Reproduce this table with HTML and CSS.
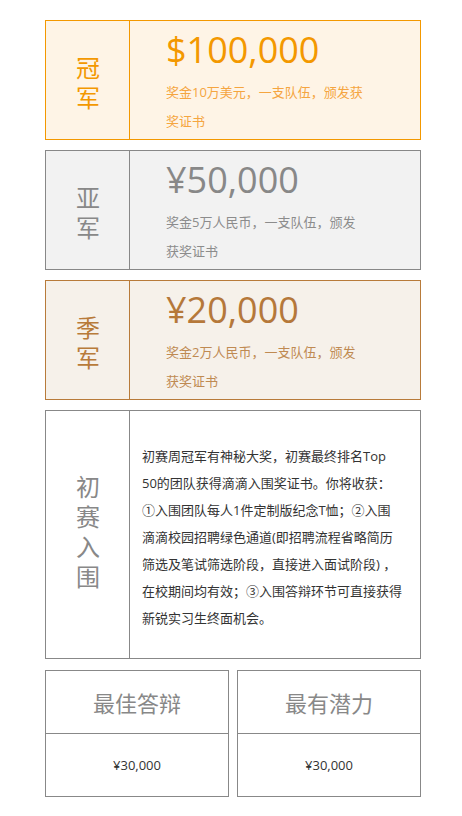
FILE: index.html
```html
<!DOCTYPE html>
<html lang="zh-CN">
<head>
<meta charset="utf-8">
<title>奖项设置</title>
<link rel="stylesheet" href="styles.css">
</head>
<body>
<div class="page">
  <div class="prize gold">
    <div class="rank"><span class="rank-text">冠军</span></div>
    <div class="info">
      <div class="amount">$100,000</div>
      <div class="desc">奖金10万美元，一支队伍，颁发获奖证书</div>
    </div>
  </div>
  <div class="prize silver">
    <div class="rank"><span class="rank-text">亚军</span></div>
    <div class="info">
      <div class="amount">¥50,000</div>
      <div class="desc">奖金5万人民币，一支队伍，颁发获奖证书</div>
    </div>
  </div>
  <div class="prize bronze">
    <div class="rank"><span class="rank-text">季军</span></div>
    <div class="info">
      <div class="amount">¥20,000</div>
      <div class="desc">奖金2万人民币，一支队伍，颁发获奖证书</div>
    </div>
  </div>
  <div class="prize finalist">
    <div class="rank"><span class="rank-text">初赛入围</span></div>
    <div class="text">初赛周冠军有神秘大奖，初赛最终排名Top<br>50的团队获得滴滴入围奖证书。你将收获：<br>①入围团队每人1件定制版纪念T恤；②入围<br>滴滴校园招聘绿色通道(即招聘流程省略简历<br>筛选及笔试筛选阶段，直接进入面试阶段) ，<br>在校期间均有效；③入围答辩环节可直接获得<br>新锐实习生终面机会。</div>
  </div>
  <div class="extras">
    <div class="extra">
      <div class="extra-title">最佳答辩</div>
      <div class="extra-amount">¥30,000</div>
    </div>
    <div class="extra">
      <div class="extra-title">最有潜力</div>
      <div class="extra-amount">¥30,000</div>
    </div>
  </div>
</div>
</body>
</html>
```

FILE: styles.css
```css
* { box-sizing: border-box; }
html, body { margin: 0; padding: 0; background: #fff; }
body {
  font-family: "Open Sans", "Noto Sans CJK SC", sans-serif;
}
.page {
  width: 376px;
  margin-left: 45px;
  padding-top: 20px;
}
.prize {
  display: flex;
  border: 1px solid #888;
  margin-bottom: 10px;
}
.rank {
  width: 84px;
  flex: none;
  border-right: 1px solid #888;
  display: flex;
  align-items: center;
  justify-content: center;
  padding-top: 12px;
}
.rank-text {
  writing-mode: vertical-rl;
  text-orientation: upright;
  font-family: "Noto Sans CJK SC", sans-serif;
  font-size: 24px;
  line-height: 24px;
  letter-spacing: 6px;
}
.info {
  padding: 11px 0 3px 36px;
}
.amount {
  font-size: 36px;
  line-height: 36px;
}
.desc {
  width: 200px;
  margin-top: 10px;
  font-size: 13px;
  line-height: 29px;
}
.gold { border-color: #f39800; background: #fef4e6; }
.gold .rank { border-color: #f39800; color: #f39800; }
.gold .amount { color: #f39800; }
.gold .desc { color: #f5a540; }

.silver { border-color: #888; background: #f2f2f2; }
.silver .rank { color: #888; }
.silver .amount { color: #888; }
.silver .desc { color: #8c8c8c; }

.bronze { border-color: #b87b3a; background: #f6f1ea; }
.bronze .rank { border-color: #b87b3a; color: #b87b3a; }
.bronze .amount { color: #b5783a; }
.bronze .desc { color: #bf8a52; }

.finalist { background: #fff; margin-bottom: 11px; }
.finalist .rank { color: #888; padding-top: 0; }
.text {
  padding: 32px 12px 26px 12px;
  font-size: 13px;
  line-height: 27px;
  color: #333;
  white-space: nowrap;
}
.extras {
  display: flex;
  gap: 8px;
}
.extra {
  flex: 1;
  border: 1px solid #888;
}
.extra-title {
  height: 63px;
  border-bottom: 1px solid #888;
  display: flex;
  align-items: center;
  justify-content: center;
  font-family: "Noto Sans CJK SC", sans-serif;
  font-size: 22px;
  color: #888;
}
.extra-amount {
  height: 62px;
  display: flex;
  align-items: center;
  justify-content: center;
  font-size: 13px;
  color: #333;
}
```
